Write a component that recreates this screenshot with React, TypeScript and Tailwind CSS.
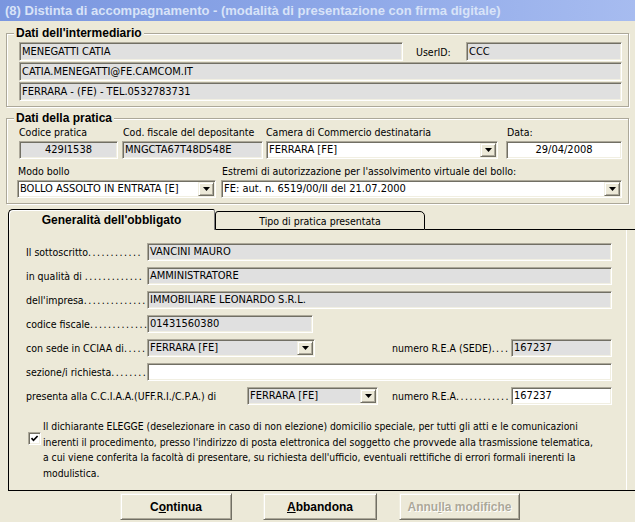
import React from "react";

const FONT = "font-['DejaVu_Sans_Condensed','DejaVu_Sans',sans-serif] [font-stretch:condensed]";
const BOLD = "font-['Liberation_Sans',Arial,sans-serif] font-bold [font-stretch:normal]";
const sunken =
  "border border-t-[#ACA899] border-l-[#ACA899] border-b-white border-r-white shadow-[inset_1px_1px_0_#716F64,inset_-1px_-1px_0_#F1EFE2]";
const raised =
  "border border-t-[#F1EFE2] border-l-[#F1EFE2] border-b-[#716F64] border-r-[#716F64] shadow-[inset_1px_1px_0_#fff,inset_-1px_-1px_0_#ACA899]";

function Box({ className, children }: { className: string; children?: React.ReactNode }) {
  return (
    <div
      className={`${sunken} flex items-center px-[2px] whitespace-nowrap overflow-hidden text-[11px] leading-[14px] ${className}`}
    >
      {children}
    </div>
  );
}

function Arrow() {
  return (
    <svg width="7" height="4" viewBox="0 0 7 4">
      <polygon points="0,0 7,0 3.5,4" fill="#000" />
    </svg>
  );
}

function Combo({ className, children }: { className: string; children?: React.ReactNode }) {
  return (
    <div className={`${sunken} flex items-stretch p-[1px] text-[11px] leading-[14px] ${className}`}>
      <span className="flex-1 flex items-center pl-[1px] whitespace-nowrap overflow-hidden">{children}</span>
      <span className={`${raised} w-[16px] bg-[#ECE9D8] flex items-center justify-center`}>
        <Arrow />
      </span>
    </div>
  );
}

function Group({ title, className, children }: { title: string; className: string; children: React.ReactNode }) {
  return (
    <fieldset
      className={`ml-[6px] w-[623px] border border-[#ACA899] shadow-[inset_1px_1px_0_#fff,1px_1px_0_#fff] ${className}`}
    >
      <legend className={`ml-[7px] px-[2px] bg-[#ECE9D8] text-[12px] leading-[14px] ${BOLD}`}>{title}</legend>
      {children}
    </fieldset>
  );
}

function Label({ className, children }: { className: string; children: React.ReactNode }) {
  return <div className={`whitespace-nowrap overflow-hidden leading-[14px] ${className}`}>{children}</div>;
}

function Dots({ children }: { children: string }) {
  return <span className="tracking-[1.5px]">{children}</span>;
}

export default function App() {
  return (
    <div className={`w-[635px] h-[522px] overflow-hidden bg-[#ECE9D8] text-black text-[10.5px] ${FONT}`}>
      {/* Title bar */}
      <div className="h-[21px] flex items-center pl-[5px] bg-[linear-gradient(to_right,#7A96DF,#8EA8E8_55%,#A7BCF0)]">
        <span className={`text-[13px] leading-[16px] text-[#D8E3F8] ${BOLD}`}>
          (8) Distinta di accompagnamento - (modalità di presentazione con firma digitale)
        </span>
      </div>

      {/* Dati dell'intermediario */}
      <Group title="Dati dell'intermediario" className="mt-[5px]">
        <div className="pl-[12px] pt-[2px] pb-[5px] flex flex-col gap-[1px]">
          <div className="flex items-center">
            <Box className="w-[384px] h-[19px] bg-[#E0E0E0]">MENEGATTI CATIA</Box>
            <Label className="ml-[13px] w-[50px]">UserID:</Label>
            <Box className="w-[156px] h-[19px] bg-[#E0E0E0]">CCC</Box>
          </div>
          <Box className="w-[603px] h-[19px] bg-[#E0E0E0]">CATIA.MENEGATTI@FE.CAMCOM.IT</Box>
          <Box className="w-[603px] h-[19px] bg-[#E0E0E0]">FERRARA - (FE) - TEL.0532783731</Box>
        </div>
      </Group>

      {/* Dati della pratica */}
      <Group title="Dati della pratica" className="mt-[4px]">
        <div className="pl-[10px] pb-[5px]">
          <div className="flex">
            <div className="ml-[2px] w-[99px] flex flex-col">
              <Label className="h-[15px] leading-[15px]">Codice pratica</Label>
              <Box className="mt-[1px] h-[18px] bg-[#E0E0E0] justify-center">429I1538</Box>
            </div>
            <div className="ml-[4px] w-[141px] flex flex-col">
              <Label className="h-[15px] leading-[15px] pl-[1px]">Cod. fiscale del depositante</Label>
              <Box className="mt-[1px] h-[18px] bg-[#E0E0E0]">MNGCTA67T48D548E</Box>
            </div>
            <div className="ml-[3px] w-[232px] flex flex-col">
              <Label className="h-[15px] leading-[15px]">Camera di Commercio destinataria</Label>
              <Combo className="mt-[1px] h-[18px] bg-white">FERRARA [FE]</Combo>
            </div>
            <div className="ml-[8px] w-[116px] flex flex-col">
              <Label className="h-[15px] leading-[15px] pl-[1px]">Data:</Label>
              <Box className="mt-[1px] h-[18px] bg-white justify-center">29/04/2008</Box>
            </div>
          </div>
          <div className="flex mt-[5px]">
            <div className="w-[199px] flex flex-col">
              <Label className="h-[15px] leading-[15px] pl-[1px]">Modo bollo</Label>
              <Combo className="mt-[1px] h-[18px] bg-white">BOLLO ASSOLTO IN ENTRATA [E]</Combo>
            </div>
            <div className="ml-[5px] w-[401px] flex flex-col">
              <Label className="h-[15px] leading-[15px] pl-[1px]">
                Estremi di autorizzazione per l'assolvimento virtuale del bollo:
              </Label>
              <Combo className="mt-[1px] h-[18px] bg-white">FE: aut. n. 6519/00/II del 21.07.2000</Combo>
            </div>
          </div>
        </div>
      </Group>

      {/* Tabs */}
      <div className="ml-[8px] w-[640px] mt-[5px]">
        <div className="flex items-end h-[21px]">
          <div className="w-[207px] h-[21px] border-l border-t border-r border-l-black border-t-black border-r-[#808080] rounded-tl-[5px] rounded-tr-[2px] flex items-center justify-center shadow-[inset_1px_1px_0_#fff]">
            <span className={`text-[12px] leading-[14px] pb-[1px] ${BOLD}`}>Generalità dell'obbligato</span>
          </div>
          <div className="w-[210px] h-[19px] border border-black rounded-tl-[3px] rounded-tr-[5px] flex items-center justify-center leading-[14px]">
            Tipo di pratica presentata
          </div>
          <div className="flex-1 h-[1px] bg-black" />
        </div>
        <div className="h-[261px] border-l border-b border-black flex">
          <div className="w-[618px] border-r border-white pt-[13px] pl-[17px]">
            <div className="flex flex-col gap-[6px]">
              <div className="flex items-center h-[18px]">
                <Label className="w-[121px]">
                  Il sottoscritto<Dots>............</Dots>
                </Label>
                <Box className="w-[465px] h-[18px] bg-[#E0E0E0]">VANCINI MAURO</Box>
              </div>
              <div className="flex items-center h-[18px]">
                <Label className="w-[121px]">
                  in qualità di <Dots>.............</Dots>
                </Label>
                <Box className="w-[465px] h-[18px] bg-[#E0E0E0]">AMMINISTRATORE</Box>
              </div>
              <div className="flex items-center h-[18px]">
                <Label className="w-[121px]">
                  dell'impresa<Dots>..............</Dots>
                </Label>
                <Box className="w-[465px] h-[18px] bg-[#E0E0E0]">IMMOBILIARE LEONARDO S.R.L.</Box>
              </div>
              <div className="flex items-center h-[18px]">
                <Label className="w-[121px]">
                  codice fiscale<Dots>.............</Dots>
                </Label>
                <Box className="w-[166px] h-[18px] bg-[#E0E0E0]">01431560380</Box>
              </div>
              <div className="flex items-center h-[18px]">
                <Label className="w-[121px]">
                  con sede in CCIAA di<Dots>.....</Dots>
                </Label>
                <Combo className="w-[168px] h-[18px] bg-[#E0E0E0]">FERRARA [FE]</Combo>
                <Label className="ml-[77px] w-[119px]">
                  numero R.E.A (SEDE)<Dots>....</Dots>
                </Label>
                <Box className="w-[101px] h-[18px] bg-[#E0E0E0]">167237</Box>
              </div>
              <div className="flex items-center h-[18px]">
                <Label className="w-[121px]">
                  sezione/i richiesta<Dots>........</Dots>
                </Label>
                <Box className="w-[465px] h-[18px] bg-white" />
              </div>
              <div className="flex items-center h-[18px]">
                <Label className="w-[221px]">presenta alla C.C.I.A.A.(UFF.R.I./C.P.A.) di</Label>
                <Combo className="w-[131px] h-[18px] bg-[#E0E0E0]">FERRARA [FE]</Combo>
                <Label className="ml-[14px] w-[119px]">
                  numero R.E.A<Dots>............</Dots>
                </Label>
                <Box className="w-[101px] h-[18px] bg-white">167237</Box>
              </div>
            </div>
            <div className="flex items-start mt-[14px]">
              <div
                className={`${sunken} ml-[2px] mt-[13px] w-[13px] h-[13px] bg-white flex items-center justify-center`}
              >
                <svg width="9" height="9" viewBox="0 0 9 9">
                  <polyline points="1.5,4.2 3.5,6.3 7.6,2" fill="none" stroke="#000" strokeWidth="1.7" />
                </svg>
              </div>
              <div className="ml-[2px] text-[10.3px] leading-[15.67px] whitespace-nowrap">
                Il dichiarante ELEGGE (deselezionare in caso di non elezione) domicilio speciale, per tutti gli atti e le
                comunicazioni
                <br />
                inerenti il procedimento, presso l'indirizzo di posta elettronica del soggetto che provvede alla
                trasmissione telematica,
                <br />
                a cui viene conferita la facoltà di presentare, su richiesta dell'ufficio, eventuali rettifiche di errori
                formali inerenti la
                <br />
                modulistica.
              </div>
            </div>
          </div>
        </div>
      </div>

      {/* Buttons */}
      <div className={`flex mt-[2px] pl-[120px] text-[12px] ${BOLD}`}>
        <div className={`${raised} w-[112px] h-[27px] bg-[#ECE9D8] flex items-center justify-center`}>
          <span>
            C<span className="underline">o</span>ntinua
          </span>
        </div>
        <div className={`${raised} ml-[31px] w-[114px] h-[27px] bg-[#ECE9D8] flex items-center justify-center`}>
          <span>
            <span className="underline">A</span>bbandona
          </span>
        </div>
        <div className={`${raised} ml-[22px] w-[121px] h-[27px] bg-[#ECE9D8] flex items-center justify-center`}>
          <span className="text-[#ACA899] [text-shadow:1px_1px_0_#fff]">
            Annu<span className="underline">l</span>la modifiche
          </span>
        </div>
      </div>
    </div>
  );
}
